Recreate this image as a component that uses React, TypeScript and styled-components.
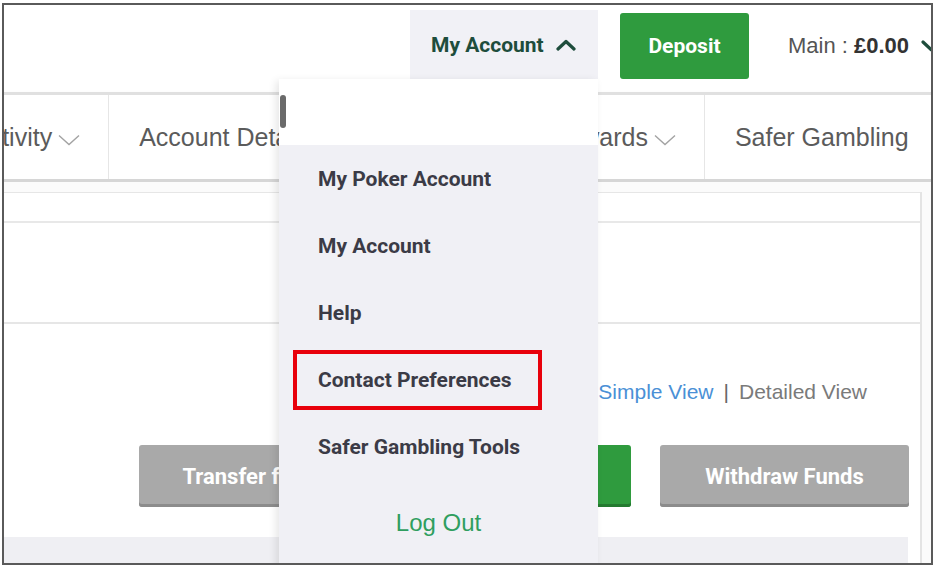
import React from "react";
import styled, { createGlobalStyle } from "styled-components";

const GlobalStyle = createGlobalStyle`
  body {
    margin: 0;
    background: #ffffff;
    font-family: "Liberation Sans", Arial, sans-serif;
  }
`;

const navItems = [
  { label: "Activity", chevron: true },
  { label: "Account Details", chevron: true },
  { label: "Settings", chevron: false },
  { label: "Rewards", chevron: true },
  { label: "Safer Gambling", chevron: false },
];

const menuItems = [
  "My Poker Account",
  "My Account",
  "Help",
  "Contact Preferences",
  "Safer Gambling Tools",
];

const ThinChevron = () => (
  <svg width="22" height="12" viewBox="0 0 22 12" fill="none">
    <path d="M1 1.5 L11 10.5 L21 1.5" stroke="#a3a3a3" strokeWidth="1.4" />
  </svg>
);

const BoldChevron: React.FC<{ up?: boolean }> = ({ up }) => (
  <svg width="20" height="12" viewBox="0 0 20 12" fill="none">
    <path
      d={up ? "M2 10 L10 2.5 L18 10" : "M2 2 L10 9.5 L18 2"}
      stroke="#1e4d3c"
      strokeWidth="3.2"
      strokeLinecap="round"
      strokeLinejoin="round"
    />
  </svg>
);

const App: React.FC = () => {
  return (
    <>
      <GlobalStyle />
      <Frame>
        <Header>
          <AccountTrigger>
            My Account
            <BoldChevron up />
          </AccountTrigger>
          <DepositButton>Deposit</DepositButton>
          <Balance>
            Main : <strong>£0.00</strong>
            <BoldChevron />
          </Balance>
        </Header>

        <Nav>
          {navItems.map((item) => (
            <NavItem key={item.label}>
              {item.label}
              {item.chevron && <ThinChevron />}
            </NavItem>
          ))}
        </Nav>

        <Content>
          <Card>
            <CardStrip />
            <CardBlock />
            <CardBody>
              <ViewSwitch>
                <ViewLink $active>Simple View</ViewLink>
                <Pipe>|</Pipe>
                <ViewLink>Detailed View</ViewLink>
              </ViewSwitch>
              <ButtonRow>
                <ActionButton $width={214} $indent={18}>
                  Transfer funds
                </ActionButton>
                <ActionButton $width={249} $green>
                  Add Funds
                </ActionButton>
                <ActionButton $width={249}>Withdraw Funds</ActionButton>
              </ButtonRow>
              <FooterBar />
            </CardBody>
          </Card>
        </Content>

        <Dropdown>
          <ScrollThumb />
          <DropdownTop />
          <MenuList>
            {menuItems.map((label) => (
              <MenuItem key={label}>
                <MenuLabel $highlight={label === "Contact Preferences"}>
                  {label}
                </MenuLabel>
              </MenuItem>
            ))}
            <LogOut>Log Out</LogOut>
          </MenuList>
        </Dropdown>
      </Frame>
    </>
  );
};

const Frame = styled.div`
  position: relative;
  box-sizing: border-box;
  width: 931px;
  height: 562px;
  margin: 3px 0 0 2px;
  border: 2px solid #5a5a5a;
  overflow: hidden;
  background: #ffffff;
`;

const Header = styled.header`
  display: flex;
  align-items: flex-start;
  height: 87px;
  padding-left: 406px;
  white-space: nowrap;
  > * {
    flex-shrink: 0;
  }
`;

const AccountTrigger = styled.div`
  display: flex;
  align-items: center;
  gap: 12px;
  box-sizing: border-box;
  width: 188px;
  height: 69px;
  margin-top: 5px;
  padding-left: 21px;
  background: #f1f1f6;
  color: #1e4d3c;
  font-family: Roboto, "Liberation Sans", sans-serif;
  font-weight: 700;
  font-size: 21px;
`;

const DepositButton = styled.button`
  width: 129px;
  height: 66px;
  margin: 8px 0 0 22px;
  border: none;
  border-radius: 3px;
  background: #2f9b3e;
  color: #ffffff;
  font-family: Roboto, "Liberation Sans", sans-serif;
  font-weight: 700;
  font-size: 21px;
`;

const Balance = styled.div`
  display: flex;
  align-items: center;
  height: 66px;
  margin: 8px 0 0 39px;
  color: #555555;
  font-size: 22px;
  strong {
    color: #333333;
    margin: 0 12px 0 6px;
  }
`;

const Nav = styled.nav`
  display: flex;
  height: 90px;
  box-sizing: border-box;
  margin-left: -61px;
  border-top: 3px solid #e0e0e0;
  border-bottom: 3px solid #d6d6d6;
  background: #ffffff;
  box-shadow: 0 3px 6px rgba(0, 0, 0, 0.08);
  white-space: nowrap;
`;

const NavItem = styled.div`
  display: flex;
  align-items: center;
  gap: 6px;
  flex-shrink: 0;
  padding: 0 28px 0 30px;
  border-right: 1px solid #e6e6e6;
  color: #5b5b5b;
  font-size: 25px;
  svg {
    margin-top: 6px;
  }
`;

const Content = styled.div`
  padding-top: 10px;
  background: #fbfbfb;
`;

const Card = styled.div`
  margin: 0 9px 0 -20px;
  border-top: 1px solid #e6e6e6;
  border-right: 2px solid #e4e4e4;
  background: #ffffff;
`;

const CardStrip = styled.div`
  height: 28px;
  border-bottom: 2px solid #e8e8e8;
`;

const CardBlock = styled.div`
  height: 99px;
  border-bottom: 2px solid #e6e6e6;
`;

const CardBody = styled.div`
  display: flex;
  flex-direction: column;
  padding-top: 56px;
`;

const ViewSwitch = styled.div`
  display: flex;
  justify-content: flex-end;
  gap: 10px;
  padding-right: 53px;
  font-size: 21px;
  line-height: 24px;
`;

const ViewLink = styled.span<{ $active?: boolean }>`
  color: ${(p) => (p.$active ? "#4a90d6" : "#7a7a7a")};
`;

const Pipe = styled.span`
  color: #666666;
`;

const ButtonRow = styled.div`
  display: flex;
  justify-content: flex-end;
  gap: 29px;
  margin-top: 41px;
  padding-right: 11px;
`;

const ActionButton = styled.button<{
  $width: number;
  $green?: boolean;
  $indent?: number;
}>`
  width: ${(p) => p.$width}px;
  height: 62px;
  padding: 0 0 0 ${(p) => p.$indent ?? 0}px;
  border: none;
  border-radius: 3px;
  background: ${(p) => (p.$green ? "#2f9b3e" : "#a9a9a9")};
  box-shadow: inset 0 -3px 0 ${(p) => (p.$green ? "#247a30" : "#8c8c8c")};
  color: #ffffff;
  font-family: Roboto, "Liberation Sans", sans-serif;
  font-weight: 700;
  font-size: 22px;
  white-space: nowrap;
  overflow: hidden;
`;

const FooterBar = styled.div`
  height: 40px;
  margin: 30px 12px 0 0;
  background: #efeff3;
`;

const Dropdown = styled.div`
  position: absolute;
  left: 275px;
  top: 74px;
  bottom: -20px;
  width: 319px;
  display: flex;
  flex-direction: column;
  background: #f0f0f5;
  box-shadow: -3px 2px 8px rgba(0, 0, 0, 0.1);
`;

const ScrollThumb = styled.div`
  position: absolute;
  left: 1px;
  top: 16px;
  width: 6px;
  height: 33px;
  border-radius: 3px;
  background: #6a6a6a;
`;

const DropdownTop = styled.div`
  height: 66px;
  background: #ffffff;
`;

const MenuList = styled.ul`
  margin: 0;
  padding: 0;
  list-style: none;
`;

const MenuItem = styled.li`
  display: flex;
  align-items: center;
  height: 67px;
  padding-left: 14px;
  font-family: Roboto, "Liberation Sans", sans-serif;
  font-weight: 700;
  font-size: 21px;
  color: #3b3b46;
`;

const MenuLabel = styled.span<{ $highlight?: boolean }>`
  display: flex;
  align-items: center;
  box-sizing: border-box;
  height: 60px;
  padding: 0 26px 0 21px;
  border: 4px solid ${(p) => (p.$highlight ? "#e8000b" : "transparent")};
`;

const LogOut = styled.li`
  height: 86px;
  line-height: 86px;
  text-align: center;
  color: #2f9e5f;
  font-size: 24px;
`;

export default App;
